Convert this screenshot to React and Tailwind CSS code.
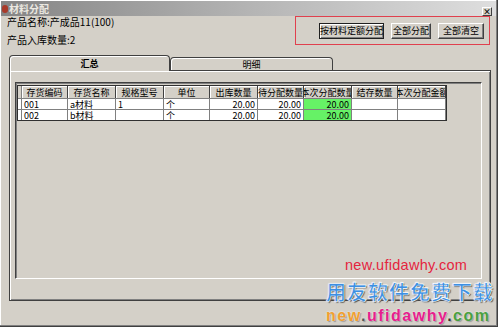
import React from "react";

const cols = [
  { t: "存货编码", w: 46 },
  { t: "存货名称", w: 48 },
  { t: "规格型号", w: 48 },
  { t: "单位", w: 46 },
  { t: "出库数量", w: 48 },
  { t: "待分配数量", w: 46 },
  { t: "本次分配数量", w: 48 },
  { t: "结存数量", w: 46 },
  { t: "本次分配金额", w: 48 },
];

const rows = [
  ["001", "a材料", "1", "个", "20.00", "20.00", "20.00", "", ""],
  ["002", "b材料", "", "个", "20.00", "20.00", "20.00", "", ""],
];

const numCols = [4, 5, 6, 7, 8];

function Btn({ children, w, def }) {
  return (
    <div
      className={
        "h-[16px] flex items-center justify-center bg-[#d4d0c8] text-[9px] leading-none text-black border " +
        (def
          ? "border-[#202020] shadow-[inset_1px_1px_0_#ffffff,inset_-1px_-1px_0_#808080]"
          : "border-t-white border-l-white border-r-[#404040] border-b-[#404040] shadow-[inset_-1px_-1px_0_#808080]")
      }
      style={{ width: w }}
    >
      {children}
    </div>
  );
}

export default function App() {
  return (
    <div
      className="relative w-[500px] h-[331px] bg-white overflow-hidden"
      style={{ fontFamily: '"Noto Sans CJK SC", "Liberation Sans", sans-serif' }}
    >
      <div className="w-[498px] h-[327px] bg-[#d4d0c8] border-r border-b border-[#404040] shadow-[inset_-1px_-1px_0_#808080,inset_1px_1px_0_#ffffff] flex flex-col">
        {/* title bar */}
        <div className="h-[15px] mx-[1px] mt-[1px] flex items-center bg-linear-to-r from-[#858585] via-[#b4b4b4] to-[#dedede] relative">
          <div className="w-[6px] h-[8px] ml-[1px] bg-[#a83a2a] rounded-sm" />
          <span className="ml-[1px] text-[10px] font-bold leading-none text-[#ece9e2]">材料分配</span>
          <div className="absolute right-[4px] top-[6px] w-[10px] h-[9px] bg-[#d4d0c8] border border-t-white border-l-white border-r-[#404040] border-b-[#404040] flex items-center justify-center text-[8px] font-bold leading-none text-black">
            ×
          </div>
        </div>

        {/* info + buttons */}
        <div className="flex justify-between pl-[7px] pr-[7px]">
          <div className="flex flex-col text-[10px] leading-none text-black">
            <div className="h-[12px] flex items-center">产品名称:产成品11(100)</div>
            <div className="h-[12px] mt-[6px] flex items-center">产品入库数量:2</div>
          </div>
          <div className="w-[195px] h-[29px] border border-[#e0404e] flex items-center justify-end gap-[7px] pr-[5px]">
            <Btn w={65} def>按材料定额分配</Btn>
            <Btn w={40}>全部分配</Btn>
            <Btn w={46}>全部清空</Btn>
          </div>
        </div>

        {/* tabs */}
        <div className="flex ml-[9px] mt-[9px] h-[15px] items-end">
          <div className="w-[161px] h-[16px] border border-b-0 border-[#404040] rounded-t-[4px] bg-[#d4d0c8] shadow-[inset_1px_1px_0_#ffffff] flex items-center justify-center text-[9px] leading-none font-bold text-black relative z-10 -mb-[1px]">
            汇总
          </div>
          <div className="w-[163px] h-[13px] border border-b-0 border-[#404040] rounded-t-[4px] bg-[#d4d0c8] shadow-[inset_1px_1px_0_#ffffff] flex items-center justify-center text-[9px] leading-none text-black">
            明细
          </div>
        </div>

        {/* tab panel */}
        <div className="ml-[9px] mr-[6px] h-[231px] border border-[#404040] shadow-[inset_1px_1px_0_#ffffff,inset_-1px_-1px_0_#808080] pl-[5px] pr-[8px] pt-[11px]">
          <div className="h-[197px] border border-t-[#404040] border-l-[#404040] border-r-white border-b-white shadow-[inset_1px_1px_0_#808080] pt-[2px] pl-[1px] flex items-start">
            <div className="flex flex-col border border-[#303030] bg-white">
              {/* header */}
              <div className="flex h-[12px] bg-[#d4d0c8]">
                <div className="w-[4px] border-r border-[#808080]" />
                {cols.map((c, i) => (
                  <div
                    key={i}
                    className="border-r border-[#404040] flex items-center justify-center overflow-hidden text-[9px] leading-none text-black whitespace-nowrap shadow-[inset_1px_1px_0_#ffffff]"
                    style={{ width: c.w }}
                  >
                    <span className="shrink-0">{c.t}</span>
                  </div>
                ))}
              </div>
              {rows.map((r, ri) => (
                <div key={ri} className="flex h-[11px] border-t border-[#808080]">
                  <div className="w-[4px] border-r border-[#808080] bg-white" />
                  {r.map((v, ci) => (
                    <div
                      key={ci}
                      className={
                        "border-r border-[#808080] flex items-center overflow-hidden text-[9px] leading-none text-black whitespace-nowrap px-[2px] " +
                        (numCols.includes(ci) ? "justify-end " : "justify-start ") +
                        (ci === 6 ? "bg-[#66f266]" : "bg-white")
                      }
                      style={{ width: cols[ci].w }}
                    >
                      {v}
                    </div>
                  ))}
                </div>
              ))}
            </div>
          </div>
        </div>
      </div>

      {/* watermarks */}
      <div
        className="absolute left-[345px] top-[258px] text-[14.5px] leading-none text-[#e4243e] tracking-[0.3px]"
        style={{ fontFamily: '"Liberation Sans", Arial, sans-serif' }}
      >
        new.ufidawhy.com
      </div>
      <div
        className="absolute left-[326px] top-[282px] text-[20px] leading-none font-bold text-[#3d8fe2] tracking-[1px] [-webkit-text-stroke:0.6px_#ffffff] [text-shadow:1px_1px_1px_#555,0_0_2px_#fff]"
        style={{ fontFamily: '"Noto Sans CJK SC", sans-serif' }}
      >
        用友软件免费下载
      </div>
      <div
        className="absolute left-[326px] top-[308px] text-[16px] leading-none font-bold tracking-[1.5px] [text-shadow:0_0_2px_#ffffff,1px_1px_1px_#888]"
        style={{ fontFamily: '"Liberation Sans", Arial, sans-serif' }}
      >
        <span className="text-[#f0a030]">new</span>
        <span className="text-[#555]">.</span>
        <span className="text-[#e6208c]">ufidawhy</span>
        <span className="text-[#333]">.</span>
        <span className="text-[#4aa040]">com</span>
      </div>
    </div>
  );
}
